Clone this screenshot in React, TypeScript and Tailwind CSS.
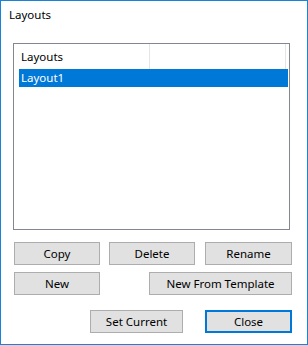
import React from "react";

const Btn = ({ label, w, primary }: { label: string; w: string; primary?: boolean }) => (
    <button
        className={`${w} h-[23px] bg-[#e1e1e1] text-[11.5px] text-black leading-none flex items-center justify-center ${
            primary ? "border-2 border-[#0078d7]" : "border border-[#adadad]"
        }`}
    >
        {label}
    </button>
);

const App = () => {
    return (
        <section
            className="w-[308px] h-[345px] bg-white border border-[#1883d7] flex flex-col text-black"
            style={{ fontFamily: '"Noto Sans", "Open Sans", sans-serif' }}
        >
            <h1 className="pl-[8px] pt-[6px] text-[11.5px] leading-[16px]">Layouts</h1>
            <div className="ml-[12px] mt-[20px] w-[277px] h-[187px] border border-[#828790] flex flex-col">
                <div className="flex h-[25px] text-[11.5px]">
                    <div className="w-[136px] pl-[7px] flex items-center border-r border-[#e5e5e5]">Layouts</div>
                    <div className="w-[136px] border-r border-[#e5e5e5]"></div>
                </div>
                <div className="ml-[5px] w-[269px] h-[18px] bg-[#0078d7] text-white text-[11.5px] pl-[2px] flex items-center">
                    Layout1
                </div>
            </div>
            <div className="flex ml-[13px] mt-[12px]">
                <Btn label="Copy" w="w-[86px]" />
                <div className="ml-[9px]">
                    <Btn label="Delete" w="w-[86px]" />
                </div>
                <div className="ml-[10px]">
                    <Btn label="Rename" w="w-[87px]" />
                </div>
            </div>
            <div className="flex justify-between ml-[13px] w-[278px] mt-[7px]">
                <Btn label="New" w="w-[86px]" />
                <Btn label="New From Template" w="w-[143px]" />
            </div>
            <div className="flex justify-end w-[291px] mt-[15px] gap-[22px]">
                <Btn label="Set Current" w="w-[93px]" />
                <Btn label="Close" w="w-[87px]" primary />
            </div>
        </section>
    );
};

export default App;
